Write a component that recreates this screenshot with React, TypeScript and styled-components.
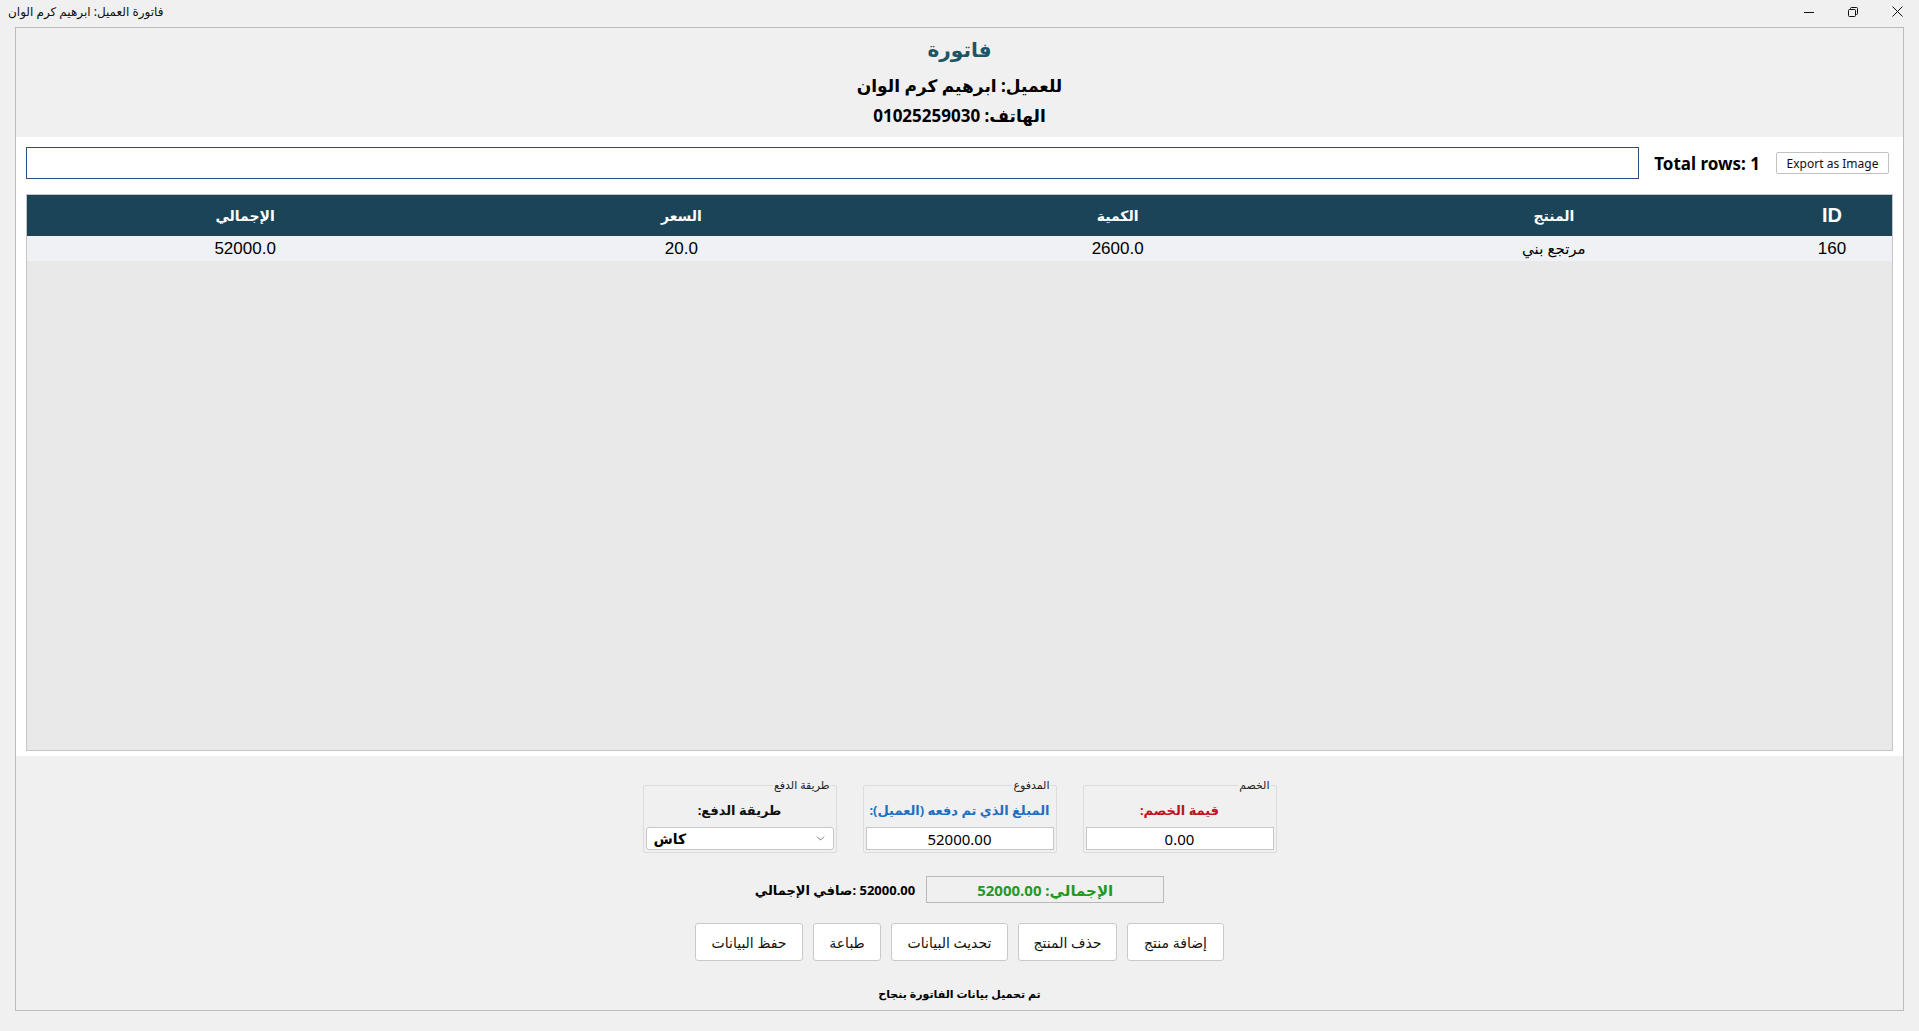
import styled, { createGlobalStyle } from "styled-components";
import { ChevronDown } from "lucide-react";

const GlobalStyle = createGlobalStyle`
  html, body {
    margin: 0;
    padding: 0;
    background: #f0f0f0;
  }
  * {
    box-sizing: border-box;
  }
`;

const ui = `"Noto Sans", "DejaVu Sans", sans-serif`;
const grid = `"Liberation Sans", "DejaVu Sans", sans-serif`;

type Row = { id: number; product: string; qty: string; price: string; total: string };

const rows: Row[] = [
  { id: 160, product: "مرتجع بني", qty: "2600.0", price: "20.0", total: "52000.0" },
];

const buttons = [
  { label: "إضافة منتج", width: 97 },
  { label: "حذف المنتج", width: 99 },
  { label: "تحديث البيانات", width: 117 },
  { label: "طباعة", width: 68 },
  { label: "حفظ البيانات", width: 108 },
];

const App = () => {
  return (
    <>
      <GlobalStyle />
      <Window>
        <TitleBar>
          <WindowTitle>فاتورة العميل: ابرهيم كرم الوان</WindowTitle>
          <Controls>
            <ControlButton>
              <svg width="10" height="10" viewBox="0 0 10 10">
                <path d="M0 5.5h10" stroke="#111" strokeWidth="1" />
              </svg>
            </ControlButton>
            <ControlButton>
              <svg width="10" height="10" viewBox="0 0 10 10" fill="none" stroke="#111" strokeWidth="1">
                <rect x="0.5" y="2.5" width="7" height="7" rx="1" />
                <path d="M2.5 2.5V1.5a1 1 0 0 1 1-1h5a1 1 0 0 1 1 1v5a1 1 0 0 1-1 1h-1" />
              </svg>
            </ControlButton>
            <ControlButton>
              <svg width="11" height="11" viewBox="0 0 11 11">
                <path d="M0.5 0.5l10 10M10.5 0.5l-10 10" stroke="#111" strokeWidth="1" />
              </svg>
            </ControlButton>
          </Controls>
        </TitleBar>

        <Frame>
          <Header>
            <InvoiceTitle>فاتورة</InvoiceTitle>
            <InfoLine $gap={6}>للعميل: ابرهيم كرم الوان</InfoLine>
            <InfoLine $gap={0}>الهاتف: 01025259030</InfoLine>
          </Header>

          <Panel>
            <Toolbar>
              <Search />
              <RowCount>Total rows: {rows.length}</RowCount>
              <SmallButton>Export as Image</SmallButton>
            </Toolbar>

            <Table>
              <HeadRow>
                <HeadCell $size={20}>ID</HeadCell>
                <HeadCell $size={14}>المنتج</HeadCell>
                <HeadCell $size={14}>الكمية</HeadCell>
                <HeadCell $size={14}>السعر</HeadCell>
                <HeadCell $size={14}>الإجمالي</HeadCell>
              </HeadRow>
              {rows.map((r) => (
                <DataRow key={r.id}>
                  <Cell $size={17}>{r.id}</Cell>
                  <Cell $size={15}>{r.product}</Cell>
                  <Cell $size={17}>{r.qty}</Cell>
                  <Cell $size={17}>{r.price}</Cell>
                  <Cell $size={17}>{r.total}</Cell>
                </DataRow>
              ))}
            </Table>
          </Panel>

          <Bottom>
            <Groups>
              <Group>
                <GroupTitle>الخصم</GroupTitle>
                <GroupLabel $color="#c0141c">قيمة الخصم:</GroupLabel>
                <Field>0.00</Field>
              </Group>
              <Group>
                <GroupTitle>المدفوع</GroupTitle>
                <GroupLabel $color="#1f6fc2">المبلغ الذي تم دفعه (العميل):</GroupLabel>
                <Field>52000.00</Field>
              </Group>
              <Group>
                <GroupTitle>طريقة الدفع</GroupTitle>
                <GroupLabel $color="#111">طريقة الدفع:</GroupLabel>
                <Combo>
                  <span>كاش</span>
                  <ChevronDown size={13} strokeWidth={1.4} color="#555" />
                </Combo>
              </Group>
            </Groups>

            <Totals>
              <GrandTotal>الإجمالي: 52000.00</GrandTotal>
              <NetTotal>
                <bdi>صافي الإجمالي</bdi>: 52000.00
              </NetTotal>
            </Totals>

            <Actions>
              {buttons.map((b) => (
                <ActionButton key={b.label} $width={b.width}>
                  {b.label}
                </ActionButton>
              ))}
            </Actions>

            <Status>تم تحميل بيانات الفاتورة بنجاح</Status>
          </Bottom>
        </Frame>
      </Window>
    </>
  );
};

export default App;

const Window = styled.div`
  width: 1919px;
  height: 1031px;
  display: flex;
  flex-direction: column;
  background: #f0f0f0;
  font-family: ${ui};
  color: #000;
  overflow: hidden;
`;

const TitleBar = styled.div`
  height: 27px;
  flex-shrink: 0;
  display: flex;
  align-items: center;
  justify-content: space-between;
  padding-left: 8px;
`;

const WindowTitle = styled.div`
  font-size: 12px;
  color: #111;
  padding-bottom: 4px;
`;

const Controls = styled.div`
  display: flex;
  height: 100%;
`;

const ControlButton = styled.div`
  width: 44px;
  height: 100%;
  display: flex;
  align-items: center;
  justify-content: center;
  padding-bottom: 4px;
`;

const Frame = styled.div`
  flex: 1;
  margin: 0 15px 20px 15px;
  border: 1px solid #bcbcbc;
  display: flex;
  flex-direction: column;
  min-height: 0;
`;

const Header = styled.div`
  height: 109px;
  flex-shrink: 0;
  display: flex;
  flex-direction: column;
  align-items: center;
  padding-top: 7px;
  direction: rtl;
`;

const InvoiceTitle = styled.div`
  font-size: 20px;
  font-weight: 700;
  color: #1e5566;
  line-height: 30px;
`;

const InfoLine = styled.div<{ $gap: number }>`
  margin-top: ${(p) => p.$gap}px;
  font-size: 17px;
  font-weight: 700;
  line-height: 30px;
`;

const Panel = styled.div`
  height: 619px;
  flex-shrink: 0;
  background: #fff;
  padding: 10px 10px 5px 10px;
  display: flex;
  flex-direction: column;
  gap: 15px;
`;

const Toolbar = styled.div`
  height: 32px;
  display: flex;
  align-items: center;
  padding-right: 4px;
`;

const Search = styled.input`
  flex: 1;
  height: 32px;
  border: 1px solid #2b4f7e;
  outline: none;
  background: #fff;
`;

const RowCount = styled.div`
  margin-left: 15px;
  font-size: 17px;
  font-weight: 700;
  white-space: nowrap;
`;

const SmallButton = styled.button`
  margin-left: 16px;
  width: 113px;
  height: 22px;
  background: #fff;
  border: 1px solid #c2c2c2;
  border-radius: 2px;
  font-family: ${ui};
  font-size: 12px;
  color: #111;
  padding: 0;
`;

const Table = styled.div`
  flex: 1;
  background: #e9e9e9;
  border: 1px solid #c6c6c6;
  direction: rtl;
  font-family: ${grid};
`;

const columns = `120px repeat(4, 1fr)`;

const HeadRow = styled.div`
  display: grid;
  grid-template-columns: ${columns};
  height: 41px;
  background: #1b4458;
`;

const HeadCell = styled.div<{ $size: number }>`
  display: flex;
  align-items: center;
  justify-content: center;
  color: #fff;
  font-weight: 700;
  font-size: ${(p) => p.$size}px;
`;

const DataRow = styled.div`
  display: grid;
  grid-template-columns: ${columns};
  height: 25px;
  background: #eff1f4;
`;

const Cell = styled.div<{ $size: number }>`
  display: flex;
  align-items: center;
  justify-content: center;
  font-size: ${(p) => p.$size}px;
  color: #000;
`;

const Bottom = styled.div`
  flex: 1;
  display: flex;
  flex-direction: column;
  align-items: center;
`;

const Groups = styled.div`
  margin-top: 22px;
  display: flex;
  gap: 26px;
  direction: rtl;
`;

const Group = styled.fieldset`
  width: 194px;
  height: 75px;
  margin: 0;
  padding: 0 2px 2px 2px;
  border: 1px solid #dcdcdc;
  border-radius: 2px;
  display: flex;
  flex-direction: column;
  align-items: stretch;
`;

const GroupTitle = styled.legend`
  font-size: 11px;
  line-height: 14px;
  padding: 0 1px;
  margin-right: 3px;
  color: #222;
`;

const GroupLabel = styled.div<{ $color: string }>`
  margin-top: 9px;
  text-align: center;
  font-size: 13px;
  font-weight: 700;
  line-height: 18px;
  color: ${(p) => p.$color};
`;

const Field = styled.div`
  margin-top: 8px;
  height: 24px;
  background: #fff;
  border: 1px solid #c8c8c8;
  display: flex;
  align-items: center;
  justify-content: center;
  font-size: 15px;
  direction: ltr;
`;

const Combo = styled.div`
  margin-top: 8px;
  height: 24px;
  background: #fff;
  border: 1px solid #c8c8c8;
  border-radius: 3px;
  display: flex;
  align-items: center;
  justify-content: space-between;
  padding: 0 6px 0 7px;
  direction: ltr;
  font-size: 14px;
  font-weight: 700;
`;

const Totals = styled.div`
  margin-top: 23px;
  display: flex;
  align-items: center;
  gap: 11px;
  direction: rtl;
`;

const GrandTotal = styled.div`
  width: 238px;
  height: 27px;
  border: 1px solid #b9b9b9;
  background: #f0f0f0;
  display: flex;
  align-items: center;
  justify-content: center;
  color: #1f9a1f;
  font-size: 15px;
  font-weight: 700;
`;

const NetTotal = styled.div`
  direction: ltr;
  font-size: 13px;
  font-weight: 700;
`;

const Actions = styled.div`
  margin-top: 20px;
  display: flex;
  gap: 10px;
  direction: rtl;
`;

const ActionButton = styled.button<{ $width: number }>`
  width: ${(p) => p.$width}px;
  height: 38px;
  padding: 0;
  background: #fff;
  border: 1px solid #c9c9c9;
  border-radius: 3px;
  font-family: ${ui};
  font-size: 14px;
  color: #111;
`;

const Status = styled.div`
  margin-top: 25px;
  font-size: 11px;
  font-weight: 700;
  direction: rtl;
`;
